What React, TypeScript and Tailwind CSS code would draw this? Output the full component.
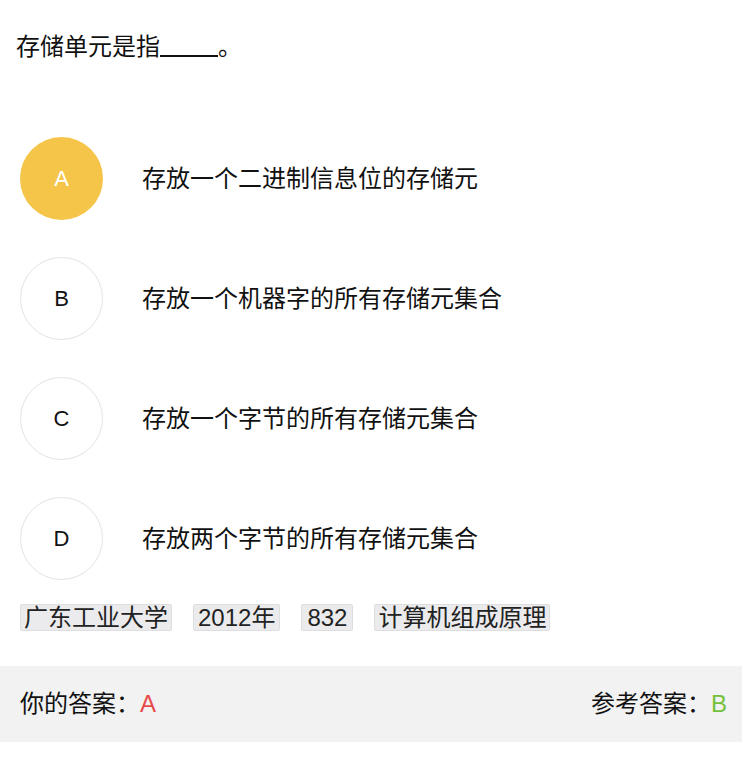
const options = [
  { key: 'A', text: '存放一个二进制信息位的存储元', picked: true },
  { key: 'B', text: '存放一个机器字的所有存储元集合', picked: false },
  { key: 'C', text: '存放一个字节的所有存储元集合', picked: false },
  { key: 'D', text: '存放两个字节的所有存储元集合', picked: false },
]

const tags = [
  { label: '广东工业大学', pad: 'px-[3px]' },
  { label: '2012年', pad: 'px-[4px]' },
  { label: '832', pad: 'px-[5px]' },
  { label: '计算机组成原理', pad: 'px-[3px]' },
]

export default function App() {
  return (
    <div
      className="w-[742px] bg-white text-[#111] text-[24px]"
      style={{ fontFamily: '"Liberation Sans", "Noto Sans CJK SC", sans-serif' }}
    >
      <div className="px-4 pt-[31px] leading-[32px] flex items-end">
        <span>存储单元是指</span>
        <span className="inline-block w-[58px] border-b-2 border-[#111] mb-[6px]" />
        <span>。</span>
      </div>

      <div className="mt-[74px] flex flex-col gap-[37px] pl-5">
        {options.map((o) => (
          <div key={o.key} className="flex items-center">
            <div
              className={
                o.picked
                  ? 'w-[83px] h-[83px] rounded-full bg-[#f5c54a] text-white text-[22px] flex items-center justify-center shrink-0'
                  : 'w-[83px] h-[83px] rounded-full border border-[#e3e3e3] text-[#111] text-[22px] flex items-center justify-center shrink-0'
              }
            >
              {o.key}
            </div>
            <div className="ml-[39px]">{o.text}</div>
          </div>
        ))}
      </div>

      <div className="mt-[24px] pl-5 flex gap-[21px]">
        {tags.map((t) => (
          <span
            key={t.label}
            className={`${t.pad} h-[27px] leading-[25px] bg-[#ebebed] border border-[#dedede] rounded-[2px] text-[#222]`}
          >
            {t.label}
          </span>
        ))}
      </div>

      <div className="mt-[35px] h-[76px] bg-[#f2f2f2] flex items-center justify-between pl-5 pr-[15px]">
        <div>
          你的答案：<span className="text-[#e84a4a]">A</span>
        </div>
        <div>
          参考答案：<span className="text-[#74c13a]">B</span>
        </div>
      </div>
    </div>
  )
}
